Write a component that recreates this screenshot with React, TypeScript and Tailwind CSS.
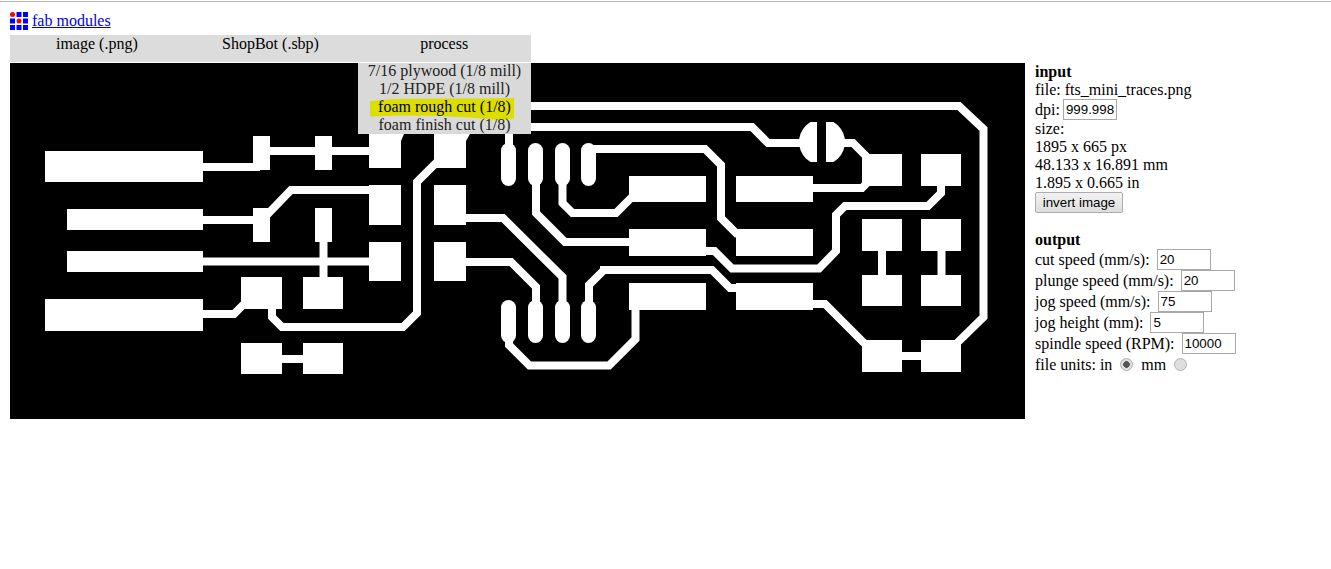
import React from 'react';

// pads as [x, y, w, h]
const pads = [
  [45, 151, 158, 31],
  [67, 209, 136, 21],
  [67, 251, 136, 21],
  [45, 299, 158, 32],
  [253, 136, 17, 34],
  [315, 136, 17, 34],
  [253, 208, 17, 34],
  [315, 208, 17, 34],
  [241, 277, 41, 32],
  [303, 277, 40, 32],
  [241, 343, 41, 31],
  [303, 343, 40, 31],
  [369, 185, 32, 40],
  [369, 242, 32, 39],
  [434, 185, 32, 40],
  [434, 242, 32, 39],
  [629, 176, 77, 26],
  [629, 229, 77, 27],
  [629, 283, 77, 27],
  [736, 176, 77, 26],
  [736, 229, 77, 27],
  [736, 283, 77, 27],
  [862, 154, 40, 32],
  [921, 154, 40, 32],
  [862, 219, 40, 32],
  [921, 219, 40, 32],
  [862, 275, 40, 31],
  [921, 275, 40, 31],
  [862, 340, 40, 32],
  [921, 340, 40, 32],
];

const pins = [
  [501, 143],
  [528, 143],
  [555, 143],
  [581, 143],
  [501, 300],
  [528, 300],
  [555, 300],
  [581, 300],
];

const traces = [
  '203,167 260,167',
  '260,151 380,151',
  '203,220 260,220 262,220 291,190 380,190',
  '203,261.5 380,261.5',
  '323.5,235 323.5,285',
  '203,314 234,314 246,302',
  '272,300 272,317 282,327 403,327 417,313 417,182 440,159',
  '270,359 320,359',
  '440,106 959,106 983.5,129 983.5,317 955,345',
  '500,127 752,127 768,143 805,143',
  '840,143 853,143 870,160',
  '509,120 509,150',
  '588,149 705,149 721,165 721,218 738,235',
  '800,188 862,188 872,178',
  '941,180 941,193 928,206 845,206 836,215 836,251 819,268.5 732,268.5 714.5,251 700,251',
  '600,270 712,270 730,288 745,288',
  '604,270 589,285 589,310',
  '800,304 825,304 868,347',
  '882,240 882,285',
  '941.5,240 941.5,285',
  '895,356 930,356',
  '536,180 536,213 565,242 640,242',
  '562.5,180 562.5,203 572.5,213 616,213 632,197',
  '460,218 503,218 562.5,277 562.5,310',
  '460,262 511,262 536,287 536,310',
  '509,330 509,345 529.5,365.5 609,365.5 635.5,339 635.5,300',
];

function Board() {
  return (
    <svg viewBox="10 63 1015 356" className="block w-[1015px] h-[356px] shrink-0 bg-black">
      <defs>
        <clipPath id="capClip">
          <rect x="790" y="122" width="64" height="40" />
        </clipPath>
      </defs>
      {traces.map((t, i) => (
        <polyline key={i} points={t} fill="none" stroke="#fff" strokeWidth="8" strokeLinejoin="miter" />
      ))}
      {pads.map(([x, y, w, h], i) => (
        <rect key={i} x={x} y={y} width={w} height={h} fill="#fff" />
      ))}
      <polygon points="369,120 404,120 404,134 401,141 401,168 369,168" fill="#fff" />
      <polygon points="434,120 470,120 470,134 466,141 466,168 434,168" fill="#fff" />
      {pins.map(([x, y], i) => (
        <rect key={i} x={x} y={y} width="15" height="43" rx="7.5" fill="#fff" />
      ))}
      <g clipPath="url(#capClip)">
        <circle cx="822" cy="142" r="23" fill="#fff" />
        <rect x="817" y="118" width="9" height="48" fill="#000" />
      </g>
    </svg>
  );
}

function Logo() {
  const cells = [0, 1, 2, 3, 4, 5, 6, 7, 8];
  return (
    <svg width="18" height="18" viewBox="0 0 18 18" className="shrink-0">
      {cells.map((c) => {
        const x = (c % 3) * 6.5;
        const y = Math.floor(c / 3) * 6.5;
        return c === 0 || c === 4 ? (
          <circle key={c} cx={x + 2.5} cy={y + 2.5} r="2.5" fill="#ff0000" />
        ) : (
          <rect key={c} x={x} y={y} width="5" height="5" fill="#0000ff" />
        );
      })}
    </svg>
  );
}

function Field({ label, value, gap = 'ml-[7px]' }: { label: string; value: string; gap?: string }) {
  return (
    <div className="flex items-center h-[21px]">
      <span>{label}</span>
      <input
        readOnly
        value={value}
        className={`${gap} w-[54px] h-[21px] border border-[#a9a9a9] px-[2px] text-[13.33px] text-black font-['Liberation_Sans',sans-serif] outline-none`}
      />
    </div>
  );
}

const radio = 'appearance-none w-[13px] h-[13px] rounded-full border border-[#b0b0b0]';

export default function App() {
  return (
    <div className="min-h-screen bg-white text-base leading-[18px] text-black font-['Liberation_Serif',serif]">
      <div className="h-[2px] border-b border-[#b9b9b9]" />
      <div className="pl-[10px] pt-[10px]">
        <div className="flex items-start gap-1 h-[23px]">
          <Logo />
          <a href="#" className="text-[#0000ee] underline">
            fab modules
          </a>
        </div>

        <div className="relative flex w-[521px] h-[27px] bg-[#dcdcdc]">
          <div className="flex-1 text-center">image (.png)</div>
          <div className="flex-1 text-center">ShopBot (.sbp)</div>
          <div className="flex-1 text-center">process</div>
          <div className="absolute z-10 top-[28px] left-[348px] w-[173px] h-[71px] bg-[#d9d9d9] text-center text-[#222]">
            <svg className="absolute left-0 top-0" width="173" height="71" viewBox="358 63 173 71">
              <polygon
                points="370,101 395,99 440,98.5 480,98.5 514,98 514,118.5 500,120 470,117.5 440,116 400,115.5 370,116.5"
                fill="#dddd00"
              />
            </svg>
            <div className="relative -mt-[1px]">
              <div className="h-[18px]">7/16 plywood (1/8 mill)</div>
              <div className="h-[18px]">1/2 HDPE (1/8 mill)</div>
              <div className="h-[18px] text-black">foam rough cut (1/8)</div>
              <div className="h-[18px]">foam finish cut (1/8)</div>
            </div>
          </div>
        </div>

        <div className="flex mt-[1px]">
          <Board />
          <div className="ml-[10px]">
            <div className="font-bold">input</div>
            <div>file: fts_mini_traces.png</div>
            <Field label="dpi:" value="999.998" gap="ml-[3px]" />
            <div>size:</div>
            <div>1895 x 665 px</div>
            <div>48.133 x 16.891 mm</div>
            <div>1.895 x 0.665 in</div>
            <button className="block w-[88px] h-[21px] rounded-[2px] border border-[#adadad] bg-gradient-to-b from-[#f2f2f2] to-[#dedede] text-[13.33px] leading-none font-['Liberation_Sans',sans-serif]">
              invert image
            </button>

            <div className="font-bold mt-[18px]">output</div>
            <Field label="cut speed (mm/s):" value="20" />
            <Field label="plunge speed (mm/s):" value="20" />
            <Field label="jog speed (mm/s):" value="75" />
            <Field label="jog height (mm):" value="5" />
            <Field label="spindle speed (RPM):" value="10000" />
            <div className="flex items-center h-[21px]">
              <span>file units: in</span>
              <input
                type="radio"
                readOnly
                checked
                className={`${radio} ml-2 bg-[radial-gradient(circle,#555_0,#555_3px,#dedede_3.6px)]`}
              />
              <span className="ml-2">mm</span>
              <input type="radio" readOnly checked={false} className={`${radio} ml-2 bg-[#dedede]`} />
            </div>
          </div>
        </div>
      </div>
    </div>
  );
}
